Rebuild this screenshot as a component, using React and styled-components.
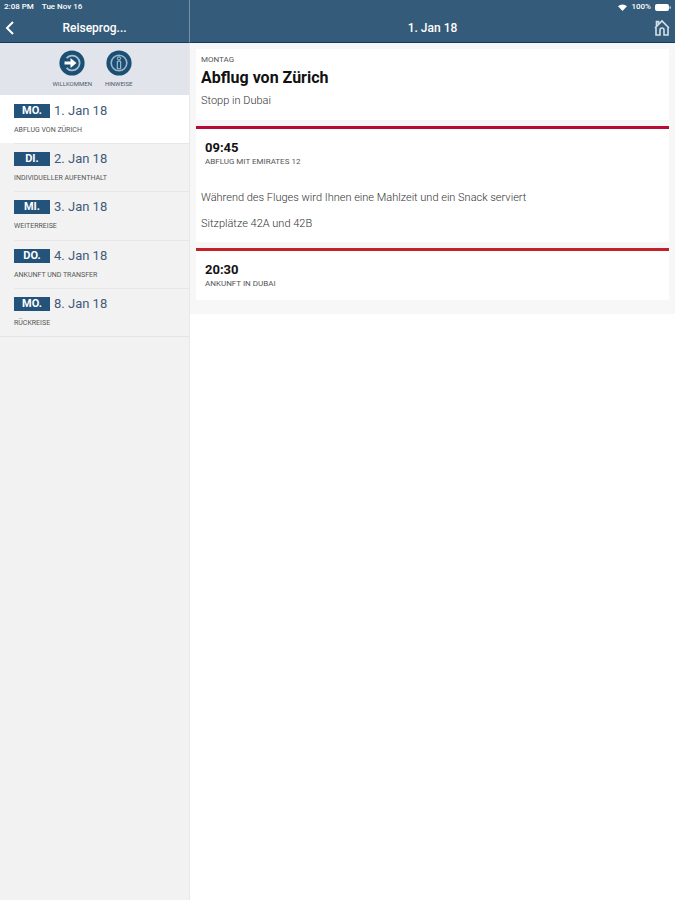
import React from "react";
import styled, { createGlobalStyle } from "styled-components";

const GlobalStyle = createGlobalStyle`
  * {
    box-sizing: border-box;
  }

  body {
    margin: 0;
    background: #fff;
    color: #333;
    font-family: Roboto, "Liberation Sans", sans-serif;
  }

  h1, h2, h3, p, ul {
    margin: 0;
    padding: 0;
  }

  button {
    padding: 0;
    border: 0;
    background: none;
    color: inherit;
    font-family: inherit;
    cursor: pointer;
  }
`;

const Page = styled.div`
  display: grid;
  grid-template-columns: 28% 1fr;
  grid-template-rows: auto 1fr;
  min-height: 100vh;
`;

const Header = styled.header`
  display: grid;
  grid-template-rows: 14px 28px;
  background: #345b79;
  border-bottom: 1px solid #123a63;
  color: #fff;
  border-left: ${(props) => (props.$divided ? "1px solid #7790a4" : "0")};
`;

const StatusBar = styled.div`
  display: flex;
  align-items: center;
  justify-content: ${(props) => (props.$end ? "flex-end" : "flex-start")};
  gap: ${(props) => (props.$end ? "4px" : "8px")};
  padding: 0 4px;
  font-size: 8px;
  font-weight: 500;
  line-height: 14px;
`;

const NavBar = styled.div`
  display: grid;
  grid-template-columns: 24px 1fr 24px;
  align-items: center;
`;

const NavTitle = styled.h1`
  grid-column: 2;
  font-size: 12px;
  font-weight: 500;
  line-height: 16px;
  text-align: center;
`;

const NavButton = styled.button`
  display: flex;
  align-items: center;
  justify-content: ${(props) => (props.$back ? "flex-start" : "center")};
  padding-left: ${(props) => (props.$back ? "5px" : "0")};
  padding-right: ${(props) => (props.$back ? "0" : "2px")};
  height: 24px;
`;

const Sidebar = styled.aside`
  background: #f2f2f2;
`;

const Shortcuts = styled.nav`
  display: flex;
  justify-content: center;
  gap: 13px;
  height: 52px;
  padding-top: 7px;
  padding-right: 4px;
  background: #e1e4ea;
`;

const Shortcut = styled.button`
  display: flex;
  flex-direction: column;
  align-items: center;
  gap: 4px;
  color: #4c5b6b;
  font-size: 6px;
  line-height: 8px;
  text-transform: uppercase;
`;

const DayList = styled.ul`
  display: grid;
  grid-auto-rows: 1fr;
  min-height: 242px;
  border-bottom: 1px solid #e4e4e4;
  list-style: none;
`;

const DayItem = styled.li`
  display: flex;
  padding-left: 14px;
  background: ${(props) => (props.$active ? "#fff" : "transparent")};
`;

const DayButton = styled.button`
  flex: 1;
  display: flex;
  flex-direction: column;
  gap: 6px;
  padding-top: 8px;
  text-align: left;

  ${DayItem} + ${DayItem} & {
    padding-top: 7px;
    border-top: 1px solid #e7e7e7;
  }
`;

const DayDate = styled.span`
  display: flex;
  align-items: center;
  gap: 4px;
  color: #43597a;
  font-size: 13px;
  line-height: 16px;
`;

const DayBadge = styled.span`
  width: 36px;
  background: #23537a;
  color: #fff;
  font-size: 11px;
  font-weight: 700;
  line-height: 14px;
  text-align: center;
`;

const Caption = styled.span`
  display: block;
  color: #555;
  font-size: ${(props) => (props.$small ? "7px" : "8px")};
  line-height: 10px;
  text-transform: uppercase;
`;

const Content = styled.main`
  border-left: 1px solid #e8e8e8;
`;

const Cards = styled.div`
  display: flex;
  flex-direction: column;
  gap: 6px;
  padding: 6px 6px 14px;
  background: #f7f7f7;
`;

const Card = styled.section`
  padding: 6px 5px 12px;
  background: #fff;
`;

const Stop = styled(Card)`
  padding: 11px 5px;
  border-top: 3px solid ${(props) => props.$line};
`;

const Title = styled.h2`
  margin-top: 3px;
  color: #111;
  font-size: 16px;
  font-weight: 700;
  line-height: 20px;
`;

const Text = styled.p`
  font-size: 11px;
  font-weight: 300;
  line-height: 14px;
  margin-top: ${(props) => props.$space || "12px"};
`;

const StopHead = styled.div`
  display: flex;
  flex-direction: column;
  gap: 1px;
  padding-left: 4px;
`;

const Time = styled.h3`
  color: #111;
  font-size: 13px;
  font-weight: 700;
  line-height: 16px;
`;

const days = [
  { day: "Mo.", date: "1. Jan 18", title: "Abflug von Zürich", active: true },
  { day: "Di.", date: "2. Jan 18", title: "Individueller Aufenthalt" },
  { day: "Mi.", date: "3. Jan 18", title: "Weiterreise" },
  { day: "Do.", date: "4. Jan 18", title: "Ankunft und Transfer" },
  { day: "Mo.", date: "8. Jan 18", title: "Rückreise" },
];

const BackIcon = () => (
  <svg width="10" height="14" viewBox="0 0 10 14" fill="none" stroke="#fff" strokeWidth="2">
    <path d="M8 1 2 7l6 6" />
  </svg>
);

const HomeIcon = () => (
  <svg width="16" height="18" viewBox="0 0 16 18" fill="none" stroke="#d5dfe8" strokeWidth="1.6">
    <path d="M1 9 8 2l7 7" />
    <path d="M2.5 7V2.5h2V5" />
    <path d="M2 8.5V16h4v-5a2 2 0 0 1 4 0v5h4V8.5" />
  </svg>
);

const WifiIcon = () => (
  <svg width="9" height="7" viewBox="0 0 9 7" fill="#fff">
    <path d="M0 2.2a6.5 6.5 0 0 1 9 0L4.5 7Z" />
  </svg>
);

const BatteryIcon = () => (
  <svg width="16" height="7" viewBox="0 0 16 7" fill="#fff">
    <rect width="14" height="7" rx="2" />
    <rect x="14.6" y="2.2" width="1" height="2.6" rx=".5" />
  </svg>
);

const WelcomeIcon = () => (
  <svg width="26" height="26" viewBox="0 0 26 26">
    <circle cx="13" cy="13" r="12.6" fill="#1c4f74" />
    <path d="M7.6 8.2a7.4 7.4 0 1 1 0 9.6" fill="none" stroke="#a9c0d0" strokeWidth="1.8" />
    <path d="M5.5 11.4h6V8l6 5-6 5v-3.4h-6Z" fill="#fff" />
  </svg>
);

const HintsIcon = () => (
  <svg width="26" height="26" viewBox="0 0 26 26" fill="none">
    <circle cx="13" cy="13" r="12.6" fill="#1c4f74" />
    <circle cx="13" cy="13" r="7.8" stroke="#9db7c9" strokeWidth="1.6" />
    <circle cx="13" cy="8.4" r="1.6" stroke="#b8cbd8" />
    <path d="M11.3 11.2h3.4v7.6h-3.4Z" stroke="#b8cbd8" />
  </svg>
);

const App = () => {
  return (
    <>
      <GlobalStyle />
      <Page>
        <Header>
          <StatusBar>
            <span>2:08 PM</span>
            <span>Tue Nov 16</span>
          </StatusBar>
          <NavBar>
            <NavButton $back aria-label="Zurück">
              <BackIcon />
            </NavButton>
            <NavTitle>Reiseprog...</NavTitle>
          </NavBar>
        </Header>
        <Header $divided>
          <StatusBar $end>
            <WifiIcon />
            <span>100%</span>
            <BatteryIcon />
          </StatusBar>
          <NavBar>
            <NavTitle as="h2">1. Jan 18</NavTitle>
            <NavButton aria-label="Startseite">
              <HomeIcon />
            </NavButton>
          </NavBar>
        </Header>

        <Sidebar>
          <Shortcuts>
            <Shortcut>
              <WelcomeIcon />
              Willkommen
            </Shortcut>
            <Shortcut>
              <HintsIcon />
              Hinweise
            </Shortcut>
          </Shortcuts>
          <DayList>
            {days.map((item) => (
              <DayItem key={item.date} $active={item.active}>
                <DayButton>
                  <DayDate>
                    <DayBadge>{item.day.toUpperCase()}</DayBadge>
                    {item.date}
                  </DayDate>
                  <Caption $small>{item.title}</Caption>
                </DayButton>
              </DayItem>
            ))}
          </DayList>
        </Sidebar>

        <Content>
          <Cards>
            <Card>
              <Caption>Montag</Caption>
              <Title>Abflug von Zürich</Title>
              <Text $space="6px">Stopp in Dubai</Text>
            </Card>
            <Stop $line="#b80a35">
              <StopHead>
                <Time>09:45</Time>
                <Caption>Abflug mit Emirates 12</Caption>
              </StopHead>
              <Text $space="24px">
                Während des Fluges wird Ihnen eine Mahlzeit und ein Snack serviert
              </Text>
              <Text>Sitzplätze 42A und 42B</Text>
            </Stop>
            <Stop $line="#c32127">
              <StopHead>
                <Time>20:30</Time>
                <Caption>Ankunft in Dubai</Caption>
              </StopHead>
            </Stop>
          </Cards>
        </Content>
      </Page>
    </>
  );
};

export default App;
